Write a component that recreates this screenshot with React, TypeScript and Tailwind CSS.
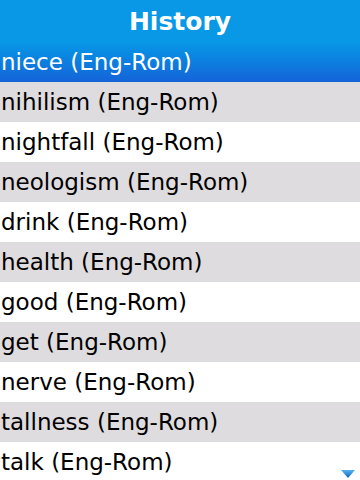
import React from "react";

const items = [
  "niece",
  "nihilism",
  "nightfall",
  "neologism",
  "drink",
  "health",
  "good",
  "get",
  "nerve",
  "tallness",
  "talk",
];

export default function App() {
  return (
    <div className="relative w-[360px] h-[480px] overflow-hidden bg-white font-[family-name:'DejaVu_Sans',sans-serif]">
      {/* Titlu */}
      <div className="h-[42px] bg-[#0898e6] flex items-center justify-center">
        <h1 className="text-white font-bold text-[25px] leading-none">History</h1>
      </div>

      <ul>
        {items.map((word, i) => (
          <li
            key={word}
            className={
              i === 0
                ? "h-[40px] flex items-center pl-[1px] text-[23px] leading-none text-white bg-gradient-to-b from-[#0898e6] to-[#1563d8]"
                : i % 2 === 1
                ? "h-[40px] flex items-center pl-[1px] text-[23px] leading-none text-black bg-[#dedcde]"
                : "h-[40px] flex items-center pl-[1px] text-[23px] leading-none text-black bg-white"
            }
          >
            {word} (Eng-Rom)
          </li>
        ))}
      </ul>

      {/* sageata de scroll */}
      <svg
        className="absolute left-[341px] top-[470px]"
        width="14"
        height="8"
        viewBox="0 0 14 8"
      >
        <defs>
          <linearGradient id="arr" x1="0" y1="0" x2="0" y2="1">
            <stop offset="0" stopColor="#5ab4f0" />
            <stop offset="1" stopColor="#0a62c8" />
          </linearGradient>
        </defs>
        <polygon points="0,0 14,0 7,8" fill="url(#arr)" />
      </svg>
    </div>
  );
}
